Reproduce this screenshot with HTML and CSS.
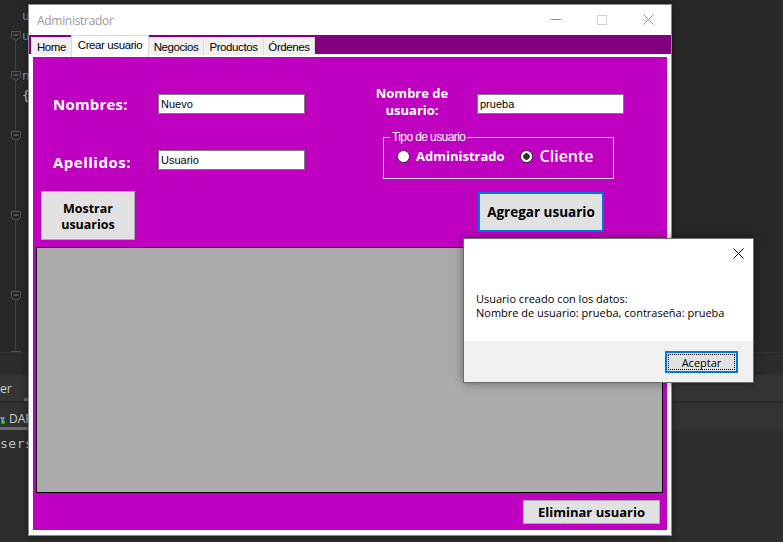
FILE: index.html
```html
<!DOCTYPE html>
<html lang="es">
<head>
<meta charset="utf-8">
<title>Administrador</title>
<link rel="stylesheet" href="styles.css">
</head>
<body>
<div class="desktop">
  <div class="editor">
    <div class="gutter">
      <div class="g-row"></div>
      <div class="g-row"><svg class="fold" width="10" height="10" viewBox="0 0 10 10"><path d="M0.5 0.5H9.5V6.5L5 9.5L0.5 6.5Z" fill="#282828" stroke="#555"/><path d="M2.5 4H7.5" stroke="#777"/></svg></div>
      <div class="g-row"></div>
      <div class="g-row"><svg class="fold" width="10" height="10" viewBox="0 0 10 10"><path d="M0.5 0.5H9.5V6.5L5 9.5L0.5 6.5Z" fill="#282828" stroke="#555"/><path d="M2.5 4H7.5" stroke="#777"/></svg></div>
      <div class="g-row"></div>
      <div class="g-row"></div>
      <div class="g-row"><svg class="fold" width="10" height="10" viewBox="0 0 10 10"><path d="M0.5 0.5H9.5V6.5L5 9.5L0.5 6.5Z" fill="#282828" stroke="#555"/><path d="M2.5 4H7.5" stroke="#777"/></svg></div>
      <div class="g-row"></div>
      <div class="g-row"></div>
      <div class="g-row"></div>
      <div class="g-row"><svg class="fold" width="10" height="10" viewBox="0 0 10 10"><path d="M0.5 0.5H9.5V6.5L5 9.5L0.5 6.5Z" fill="#282828" stroke="#555"/><path d="M2.5 4H7.5" stroke="#777"/></svg></div>
      <div class="g-row"></div>
      <div class="g-row"></div>
      <div class="g-row"></div>
      <div class="g-row"><svg class="fold" width="10" height="10" viewBox="0 0 10 10"><path d="M0.5 0.5H9.5V6.5L5 9.5L0.5 6.5Z" fill="#282828" stroke="#555"/><path d="M2.5 4H7.5" stroke="#777"/></svg></div>
      <div class="g-row"></div>
      <div class="g-row"></div>
      <div class="g-row"><svg class="fold" width="10" height="10" viewBox="0 0 10 10"><path d="M0.5 0.5H9.5V6.5L5 9.5L0.5 6.5Z" fill="#282828" stroke="#555"/><path d="M2.5 4H7.5" stroke="#777"/></svg></div>
    </div>
    <div class="code">
      <div class="line kw">u</div>
      <div class="line kw">u</div>
      <div class="line"></div>
      <div class="line kw">n</div>
      <div class="line punct">{</div>
    </div>
  </div>
  <div class="strip-a"></div>
  <div class="strip-b"><span class="pane-text">er</span><span class="mini-bar"></span></div>
  <div class="strip-c"><span class="arrow">▾</span><span class="green"></span><span class="pane-text">DAR</span></div>
  <div class="strip-d"><span class="gray-bar"></span><span class="mono">sers</span></div>

  <div class="window">
    <div class="titlebar">
      <span class="title">Administrador</span>
      <div class="controls">
        <div class="ctl"><svg width="10" height="10" viewBox="0 0 10 10"><path d="M0 4.5H10" stroke="#8f8f8f"/></svg></div>
        <div class="ctl"><svg width="10" height="10" viewBox="0 0 10 10"><rect x="0.5" y="0.5" width="9" height="9" fill="none" stroke="#d0d0d0"/></svg></div>
        <div class="ctl"><svg width="11" height="11" viewBox="0 0 11 11"><path d="M0.5 0.5L10.5 10.5M10.5 0.5L0.5 10.5" stroke="#8f8f8f"/></svg></div>
      </div>
    </div>
    <div class="tabstrip">
      <div class="tab w-home">Home</div>
      <div class="tab active w-crear">Crear usuario</div>
      <div class="tab w-neg">Negocios</div>
      <div class="tab w-prod">Productos</div>
      <div class="tab w-ord">Órdenes</div>
    </div>
    <div class="body">
      <div class="page">
        <div class="form-top">
          <div class="col-left">
            <div class="field-row">
              <span class="lbl">Nombres:</span>
              <div class="txt">Nuevo</div>
            </div>
            <div class="field-row">
              <span class="lbl lbl-ap">Apellidos:</span>
              <div class="txt">Usuario</div>
            </div>
          </div>
          <div class="col-right">
            <div class="user-row">
              <span class="lbl-user">Nombre de usuario:</span>
              <div class="txt txt-user">prueba</div>
            </div>
            <fieldset class="group">
              <legend>Tipo de usuario</legend>
              <div class="radios">
                <span class="radio"></span><span class="opt-admin">Administrado</span>
                <span class="radio checked"></span><span class="opt-cliente">Cliente</span>
              </div>
            </fieldset>
          </div>
        </div>
        <div class="btn-row">
          <div class="btn btn-mostrar"><span class="btn-line">Mostrar</span><span class="btn-line">usuarios</span></div>
          <div class="btn btn-agregar">Agregar usuario</div>
        </div>
        <div class="grid"></div>
        <div class="btn btn-eliminar">Eliminar usuario</div>
      </div>
    </div>
  </div>

  <div class="dialog">
    <div class="dlg-head">
      <svg width="11" height="11" viewBox="0 0 11 11"><path d="M0.5 0.5L10.5 10.5M10.5 0.5L0.5 10.5" stroke="#000"/></svg>
    </div>
    <div class="dlg-msg"><p class="msg-line">Usuario creado con los datos:</p><p class="msg-line">Nombre de usuario: prueba, contraseña: prueba</p></div>
    <div class="dlg-foot">
      <div class="dlg-btn"><span>Aceptar</span></div>
    </div>
  </div>
</div>
</body>
</html>
```
FILE: styles.css
```css
* { box-sizing: border-box; }
html, body { margin: 0; padding: 0; }
body {
  width: 783px;
  height: 542px;
  overflow: hidden;
  background: #282828;
  font-family: "Open Sans", sans-serif;
}
.desktop {
  position: relative;
  width: 783px;
  height: 542px;
  overflow: hidden;
  background: #2d2d2d;
}

/* background editor */
.editor {
  display: flex;
  height: 352px;
  background: #282828;
  overflow: hidden;
}
.gutter {
  width: 21px;
  padding-top: 6px;
  background: linear-gradient(#404040, #404040) 15px 32px / 1px 330px no-repeat;
}
.g-row {
  height: 20px;
  display: flex;
  align-items: center;
  padding-left: 11px;
}
.code {
  padding: 6px 0 0 1px;
  font-family: "DejaVu Sans Mono", monospace;
  font-size: 13px;
}
.line { height: 20px; line-height: 20px; }
.kw { color: #569cd6; }
.punct { color: #c8c8c8; }

.strip-a { height: 23px; background: #2b2b2b; border-top: 1px solid #333; }
.strip-b {
  height: 28px;
  background: #353535;
  border-bottom: 2px solid #2a2a2a;
  display: flex;
  align-items: center;
}
.pane-text { font: 12px "Open Sans", sans-serif; color: #cfcfcf; }
.mini-bar { width: 9px; height: 3px; background: #6a6a6a; margin: 22px 0 0 12px; }
.strip-c {
  height: 27px;
  background: #323232;
  display: flex;
  align-items: center;
  padding-top: 3px;
}
.arrow { font-size: 10px; color: #6b8fd6; width: 8px; }
.green { width: 4px; height: 4px; border-radius: 50%; background: #2ed12e; margin: 8px 0 0 -7px; }
.strip-c .pane-text { margin-left: 4px; }
.strip-d {
  display: flex;
  flex-direction: column;
}
.gray-bar { width: 29px; height: 3px; background: #6a6a6a; margin-top: -3px; }
.mono {
  font: 13px "DejaVu Sans Mono", monospace;
  color: #bdbdbd;
  margin-top: 6px;
  letter-spacing: 0.5px;
}

/* main window */
.window {
  position: absolute;
  left: 28px;
  top: 4px;
  width: 644px;
  height: 532px;
  border: 1px solid #8a8a8a;
  background: #fff;
  display: flex;
  flex-direction: column;
  box-shadow: 0 0 7px rgba(0, 0, 0, 0.45);
}
.titlebar {
  height: 30px;
  flex-shrink: 0;
  display: flex;
  align-items: center;
  padding-left: 8px;
}
.title {
  font-size: 12px;
  color: #9a9a9a;
  letter-spacing: -0.3px;
}
.controls { margin-left: auto; display: flex; height: 100%; }
.ctl {
  width: 46px;
  display: flex;
  align-items: center;
  justify-content: center;
}
.ctl svg { margin-top: -1px; }

.tabstrip {
  height: 22px;
  flex-shrink: 0;
  display: flex;
  align-items: flex-end;
  padding-left: 2px;
  background: linear-gradient(#800080, #800080) 0 0 / 100% 19px no-repeat, #fff;
}
.tab {
  height: 18px;
  margin-bottom: 2px;
  margin-right: -1px;
  background: #f0f0f0;
  border: 1px solid #d9d9d9;
  border-bottom: none;
  display: flex;
  align-items: center;
  justify-content: center;
  font: 11.5px "Liberation Sans", sans-serif;
  letter-spacing: -0.4px;
  color: #000;
}
.tab.active {
  height: 22px;
  margin-bottom: 0;
  background: #fff;
  padding-bottom: 3px;
}
.w-home { width: 41px; }
.w-crear { width: 78px; }
.w-neg { width: 56px; }
.w-prod { width: 61px; }
.w-ord { width: 52px; }

.body {
  flex: 1;
  display: flex;
  padding: 0 4px 5px 4px;
  background: #fff;
}
.page {
  flex: 1;
  background: #c000c0;
  display: flex;
  flex-direction: column;
}

.form-top {
  display: flex;
  height: 134px;
  flex-shrink: 0;
}
.col-left {
  padding: 37px 0 0 20px;
  display: flex;
  flex-direction: column;
  gap: 36px;
}
.field-row {
  display: flex;
  align-items: center;
  height: 20px;
}
.lbl {
  width: 105px;
  font-weight: 700;
  font-size: 15px;
  color: #fff;
  letter-spacing: 0.2px;
}
.lbl-ap { margin-top: 3px; letter-spacing: 0.5px; }
.txt {
  width: 147px;
  height: 20px;
  border: 1px solid #7a7a7a;
  background: #fff;
  font: 11px/18px "Liberation Sans", sans-serif;
  color: #000;
  padding-left: 2px;
}
.col-right {
  margin-left: 70px;
  padding-top: 30px;
  display: flex;
  flex-direction: column;
}
.user-row {
  display: flex;
  align-items: center;
  height: 34px;
}
.lbl-user {
  width: 74px;
  text-align: center;
  font-weight: 700;
  font-size: 13px;
  line-height: 17px;
  color: #fff;
  margin-bottom: 5px;
}
.txt-user { margin-left: 28px; }

.group {
  margin: 10px 0 0 8px;
  width: 231px;
  height: 48px;
  border: 1px solid #e4e4e4;
  padding: 0 0 0 6px;
  min-width: 0;
}
.group legend {
  padding: 0 2px;
  font: 12px/13px "Liberation Sans", sans-serif;
  letter-spacing: -0.6px;
  color: #fff;
}
.radios {
  display: flex;
  align-items: center;
  height: 20px;
  margin-top: 2px;
  padding-left: 7px;
}
.radio {
  width: 13px;
  height: 13px;
  border-radius: 50%;
  border: 1px solid #333;
  background: #fff;
  flex-shrink: 0;
}
.radio.checked {
  background: radial-gradient(circle, #333 0, #333 3px, #fff 3.5px);
  margin-left: 15px;
}
.opt-admin {
  margin-left: 6px;
  font-weight: 700;
  font-size: 13px;
  color: #fff;
}
.opt-cliente {
  margin-left: 7px;
  font-weight: 600;
  font-size: 16px;
  color: #fff;
}

.btn {
  background: #e1e1e1;
  border: 1px solid #adadad;
  display: flex;
  align-items: center;
  justify-content: center;
  text-align: center;
  font-weight: 700;
  font-size: 13px;
  color: #000;
}
.btn-row {
  display: flex;
  align-items: flex-start;
  height: 49px;
  flex-shrink: 0;
}
.btn-mostrar {
  margin-left: 8px;
  width: 94px;
  height: 49px;
  flex-direction: column;
  padding-top: 1px;
}
.btn-line { display: block; line-height: 18px; height: 16px; font-size: 12.5px; }
.btn-agregar {
  margin: 1px 0 0 343px;
  width: 126px;
  height: 40px;
  border: 2px solid #0078d7;
  font-size: 13.5px;
}
.grid {
  margin: 7px 0 0 3px;
  width: 627px;
  height: 246px;
  flex-shrink: 0;
  background: #ababab;
  border: 1px solid #000;
}
.btn-eliminar {
  margin: 7px 0 0 490px;
  width: 137px;
  height: 24px;
}

/* message box */
.dialog {
  position: absolute;
  left: 463px;
  top: 238px;
  width: 291px;
  height: 145px;
  border: 1px solid #6e6e6e;
  background: #fff;
  display: flex;
  flex-direction: column;
  box-shadow: 0 0 9px rgba(0, 0, 0, 0.4);
}
.dlg-head {
  height: 32px;
  flex-shrink: 0;
  display: flex;
  justify-content: flex-end;
  align-items: flex-start;
  padding: 9px 9px 0 0;
}
.dlg-msg {
  flex: 1;
  padding: 20px 0 0 12px;
  font-size: 11px;
  color: #000;
}
.msg-line {
  margin: 0;
  line-height: 15px;
  height: 13px;
  white-space: nowrap;
}
.msg-line + .msg-line { margin-top: 1px; }
.dlg-foot {
  height: 41px;
  flex-shrink: 0;
  background: #f0f0f0;
  display: flex;
  justify-content: flex-end;
  padding: 10px 15px 0 0;
}
.dlg-btn {
  width: 73px;
  height: 22px;
  border: 2px solid #0078d7;
  background: #e1e1e1;
  padding: 1px;
}
.dlg-btn span {
  display: flex;
  height: 100%;
  align-items: center;
  justify-content: center;
  border: 1px dotted #000;
  font-size: 11px;
  color: #000;
}
```
